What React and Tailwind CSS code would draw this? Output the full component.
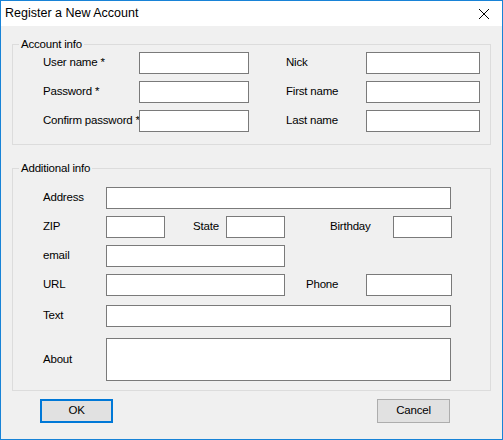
const Field = ({ w, h = 22 }) => (
  <div className="bg-white border border-[#7a7a7a] shrink-0" style={{ width: w, height: h }} />
);

const Label = ({ w, children, className = "" }) => (
  <div className={`shrink-0 whitespace-nowrap ${className}`} style={{ width: w }}>
    {children}
  </div>
);

export default function App() {
  return (
    <div
      className="w-[503px] h-[440px] border border-[#1883d7] bg-[#f0f0f0] text-[11.5px] tracking-[-0.2px] text-black flex flex-col overflow-hidden"
      style={{ fontFamily: '"Liberation Sans", Arial, sans-serif' }}
    >
      {/* Title bar */}
      <div className="h-[25px] bg-white flex items-center justify-between shrink-0">
        <span className="pl-[4px] text-[12.5px] tracking-normal">Register a New Account</span>
        <svg width="12" height="12" viewBox="0 0 12 12" className="mr-[12px]">
          <path d="M1 1 L11 11 M11 1 L1 11" stroke="#000" strokeWidth="1" />
        </svg>
      </div>

      {/* Account info */}
      <fieldset className="mx-[11px] mt-[11px] border border-[#dcdcdc] pb-[12px] pt-[1px]">
        <legend className="ml-[6px] px-[2px] leading-[14px]">Account info</legend>
        <div className="flex flex-col gap-[7px]">
          {[
            ["User name *", "Nick"],
            ["Password *", "First name"],
            ["Confirm password *", "Last name"],
          ].map(([a, b]) => (
            <div key={a} className="flex items-center">
              <Label w={126} className="pl-[30px]">{a}</Label>
              <Field w={110} />
              <Label w={80} className="ml-[37px]">{b}</Label>
              <Field w={114} />
            </div>
          ))}
        </div>
      </fieldset>

      {/* Additional info */}
      <fieldset className="mx-[11px] mt-[16px] border border-[#dcdcdc] pb-[9px] pt-[12px]">
        <legend className="ml-[6px] px-[2px] leading-[14px]">Additional info</legend>
        <div className="flex flex-col">
          <div className="flex items-center">
            <Label w={93} className="pl-[30px]">Address</Label>
            <Field w={345} />
          </div>
          <div className="flex items-center mt-[7px]">
            <Label w={93} className="pl-[30px]">ZIP</Label>
            <Field w={59} />
            <Label w={33} className="ml-[28px]">State</Label>
            <Field w={59} />
            <Label w={63} className="ml-[45px]">Birthday</Label>
            <Field w={59} />
          </div>
          <div className="flex items-center mt-[7px]">
            <Label w={93} className="pl-[30px]">email</Label>
            <Field w={179} />
          </div>
          <div className="flex items-center mt-[7px]">
            <Label w={93} className="pl-[30px]">URL</Label>
            <Field w={179} />
            <Label w={60} className="ml-[21px]">Phone</Label>
            <Field w={86} />
          </div>
          <div className="flex items-center mt-[9px]">
            <Label w={93} className="pl-[30px]">Text</Label>
            <Field w={345} />
          </div>
          <div className="flex items-center mt-[11px]">
            <Label w={93} className="pl-[30px]">About</Label>
            <Field w={345} h={43} />
          </div>
        </div>
      </fieldset>

      {/* Buttons */}
      <div className="flex justify-between mt-[8px] pl-[39px] pr-[52px]">
        <button className="w-[73px] h-[24px] bg-[#e1e1e1] border-2 border-[#0078d7]">OK</button>
        <button className="w-[73px] h-[24px] bg-[#e1e1e1] border border-[#adadad]">Cancel</button>
      </div>
    </div>
  );
}
